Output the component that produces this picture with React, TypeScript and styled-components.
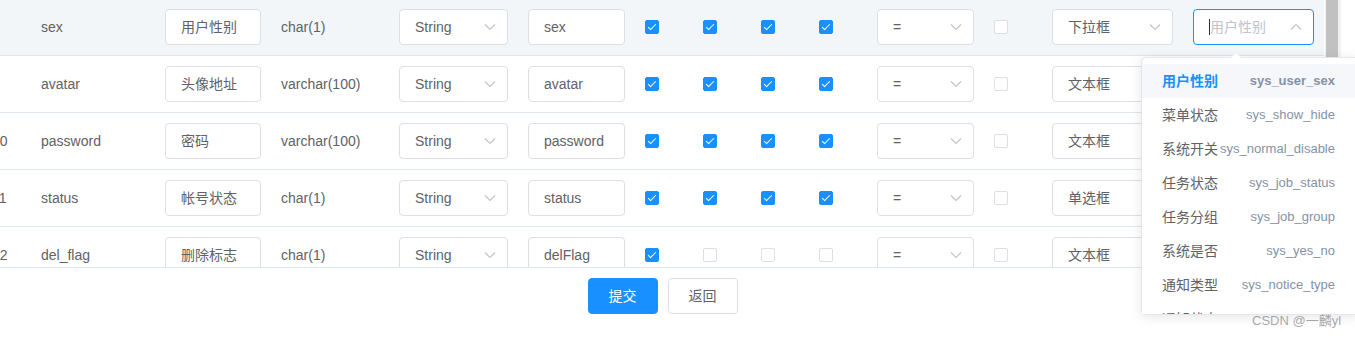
import React from "react";
import styled, { createGlobalStyle, css } from "styled-components";

const GlobalStyle = createGlobalStyle`
  html, body { margin: 0; padding: 0; overflow: hidden; background: #fff; }
  body {
    font-family: "Liberation Sans", Arial, "Noto Sans CJK SC", sans-serif;
    font-size: 14px;
    color: #606266;
  }
  * { box-sizing: border-box; }
`;

const BLUE = "#1890ff";

const Page = styled.div`
  position: relative;
  width: 1355px;
  height: 338px;
  overflow: hidden;
  background: #fff;
`;

const BodyFrame = styled.div`
  display: flex;
  width: 1341px;
  height: 268px;
  border-bottom: 1px solid #dfe6ec;
`;

const ScrollArea = styled.div`
  width: 1325px;
  overflow: hidden;
`;

const Table = styled.table`
  table-layout: fixed;
  border-collapse: separate;
  border-spacing: 0;
  width: 1342px;
  margin: -1px 0 0 -18px;
`;

const Row = styled.tr<{ $hover?: boolean }>`
  background: ${(p) => (p.$hover ? "#f3f6f9" : "#fff")};
`;

const Cell = styled.td`
  padding: 10px 10px;
  border-bottom: 1px solid #dfe6ec;
  vertical-align: middle;
  font-size: 14px;
  line-height: 23px;
  color: #606266;
  white-space: nowrap;
  overflow: hidden;
`;

const boxBase = css`
  display: flex;
  align-items: center;
  width: 100%;
  height: 36px;
  border: 1px solid #dcdfe6;
  border-radius: 4px;
  background: #fff;
  font-size: 14px;
  color: #606266;
  white-space: nowrap;
  overflow: hidden;
`;

const TextInput = styled.div`
  ${boxBase};
  padding: 0 15px;
`;

const SelectBox = styled.div<{ $focused?: boolean }>`
  ${boxBase};
  justify-content: space-between;
  padding: 0 11px 0 15px;
  border-color: ${(p) => (p.$focused ? BLUE : "#dcdfe6")};
`;

const SelectValue = styled.span<{ $placeholder?: boolean }>`
  display: flex;
  align-items: center;
  color: ${(p) => (p.$placeholder ? "#c0c4cc" : "#606266")};
`;

const Caret = styled.span`
  display: inline-block;
  width: 1px;
  height: 16px;
  background: #303133;
`;

const Check = styled.span<{ $checked?: boolean }>`
  position: relative;
  display: block;
  width: 14px;
  height: 14px;
  border-radius: 2px;
  border: 1px solid ${(p) => (p.$checked ? BLUE : "#dcdfe6")};
  background: ${(p) => (p.$checked ? BLUE : "#fff")};
  ${(p) =>
    p.$checked &&
    css`
      &::after {
        content: "";
        position: absolute;
        left: 4px;
        top: 1px;
        width: 3px;
        height: 7px;
        border: 1px solid #fff;
        border-left: 0;
        border-top: 0;
        transform: rotate(45deg);
      }
    `}
`;

const ScrollTrack = styled.div`
  width: 16px;
  height: 267px;
  background: #f1f1f1;
  padding-left: 1px;
`;

const ScrollThumb = styled.div`
  width: 12px;
  height: 200px;
  background: #c1c1c1;
`;

const Footer = styled.div`
  width: 1325px;
  display: flex;
  justify-content: center;
  gap: 10px;
  padding-top: 10px;
`;

const Button = styled.button<{ $primary?: boolean }>`
  height: 36px;
  width: 70px;
  padding: 0 20px;
  border-radius: 4px;
  font-family: inherit;
  font-size: 14px;
  line-height: 1;
  cursor: pointer;
  border: 1px solid ${(p) => (p.$primary ? BLUE : "#dcdfe6")};
  background: ${(p) => (p.$primary ? BLUE : "#fff")};
  color: ${(p) => (p.$primary ? "#fff" : "#606266")};
`;

const Dropdown = styled.div`
  position: absolute;
  left: 1141px;
  top: 57px;
  width: 220px;
  background: #fff;
  border: 1px solid #e4e7ed;
  border-radius: 4px;
  box-shadow: 0 2px 12px 0 rgba(0, 0, 0, 0.1);
`;

const Arrow = styled.div`
  position: absolute;
  top: -6px;
  left: 88px;
  width: 0;
  height: 0;
  border-left: 6px solid transparent;
  border-right: 6px solid transparent;
  border-bottom: 6px solid #ebeef5;
  &::after {
    content: "";
    position: absolute;
    left: -6px;
    top: 1px;
    border-left: 6px solid transparent;
    border-right: 6px solid transparent;
    border-bottom: 6px solid #fff;
  }
`;

const OptionList = styled.ul`
  list-style: none;
  margin: 0;
  padding: 6px 5px 0 0;
  height: 256px;
  overflow: hidden;
`;

const Option = styled.li<{ $selected?: boolean }>`
  display: flex;
  justify-content: space-between;
  height: 34px;
  line-height: 34px;
  padding: 0 20px;
  white-space: nowrap;
  font-size: 14px;
  color: ${(p) => (p.$selected ? BLUE : "#606266")};
  font-weight: ${(p) => (p.$selected ? 700 : 400)};
  background: ${(p) => (p.$selected ? "#f5f7fa" : "#fff")};
`;

const DictType = styled.span`
  color: #8492a6;
  font-size: 13px;
`;

const Watermark = styled.div`
  position: absolute;
  left: 1252px;
  top: 311px;
  font-size: 13px;
  line-height: 20px;
  color: rgba(110, 110, 110, 0.6);
  white-space: nowrap;
`;

const Chevron = ({ up }: { up?: boolean }) => (
  <svg width="12" height="8" viewBox="0 0 12 8">
    <polyline
      points={up ? "1,6.5 6,1.5 11,6.5" : "1,1.5 6,6.5 11,1.5"}
      fill="none"
      stroke="#c0c4cc"
      strokeWidth="1.2"
    />
  </svg>
);

type Col = { idx: number; name: string; desc: string; phys: string; field: string; checks: boolean[]; html: string };

const rows: Col[] = [
  { idx: 8, name: "sex", desc: "用户性别", phys: "char(1)", field: "sex", checks: [true, true, true, true], html: "下拉框" },
  { idx: 9, name: "avatar", desc: "头像地址", phys: "varchar(100)", field: "avatar", checks: [true, true, true, true], html: "文本框" },
  { idx: 10, name: "password", desc: "密码", phys: "varchar(100)", field: "password", checks: [true, true, true, true], html: "文本框" },
  { idx: 11, name: "status", desc: "帐号状态", phys: "char(1)", field: "status", checks: [true, true, true, true], html: "单选框" },
  { idx: 12, name: "del_flag", desc: "删除标志", phys: "char(1)", field: "delFlag", checks: [true, false, false, false], html: "文本框" },
];

const widths = [49, 124, 116, 118, 129, 117, 58, 58, 58, 58, 117, 58, 141, 141];

const dicts = [
  ["用户性别", "sys_user_sex"],
  ["菜单状态", "sys_show_hide"],
  ["系统开关", "sys_normal_disable"],
  ["任务状态", "sys_job_status"],
  ["任务分组", "sys_job_group"],
  ["系统是否", "sys_yes_no"],
  ["通知类型", "sys_notice_type"],
  ["通知状态", "sys_notice_status"],
];

export default function App() {
  return (
    <Page>
      <GlobalStyle />
      <BodyFrame>
        <ScrollArea>
          <Table>
            <colgroup>
              {widths.map((w, i) => (
                <col key={i} style={{ width: w }} />
              ))}
            </colgroup>
            <tbody>
              {rows.map((r, ri) => (
                <Row key={r.idx} $hover={ri === 0}>
                  <Cell>{r.idx}</Cell>
                  <Cell>{r.name}</Cell>
                  <Cell>
                    <TextInput>{r.desc}</TextInput>
                  </Cell>
                  <Cell>{r.phys}</Cell>
                  <Cell>
                    <SelectBox>
                      <SelectValue>String</SelectValue>
                      <Chevron />
                    </SelectBox>
                  </Cell>
                  <Cell>
                    <TextInput>{r.field}</TextInput>
                  </Cell>
                  {r.checks.map((c, ci) => (
                    <Cell key={ci}>
                      <Check $checked={c} />
                    </Cell>
                  ))}
                  <Cell>
                    <SelectBox>
                      <SelectValue>=</SelectValue>
                      <Chevron />
                    </SelectBox>
                  </Cell>
                  <Cell>
                    <Check />
                  </Cell>
                  <Cell>
                    <SelectBox>
                      <SelectValue>{r.html}</SelectValue>
                      <Chevron />
                    </SelectBox>
                  </Cell>
                  <Cell>
                    {ri === 0 ? (
                      <SelectBox $focused>
                        <SelectValue $placeholder>
                          <Caret />
                          用户性别
                        </SelectValue>
                        <Chevron up />
                      </SelectBox>
                    ) : (
                      <SelectBox>
                        <SelectValue $placeholder>请选择</SelectValue>
                        <Chevron />
                      </SelectBox>
                    )}
                  </Cell>
                </Row>
              ))}
            </tbody>
          </Table>
        </ScrollArea>
        <ScrollTrack>
          <ScrollThumb />
        </ScrollTrack>
      </BodyFrame>
      <Footer>
        <Button $primary>提交</Button>
        <Button>返回</Button>
      </Footer>
      <Dropdown>
        <Arrow />
        <OptionList>
          {dicts.map(([n, t], i) => (
            <Option key={t} $selected={i === 0}>
              <span>{n}</span>
              <DictType>{t}</DictType>
            </Option>
          ))}
        </OptionList>
      </Dropdown>
      <Watermark>CSDN @一麟yl</Watermark>
    </Page>
  );
}
